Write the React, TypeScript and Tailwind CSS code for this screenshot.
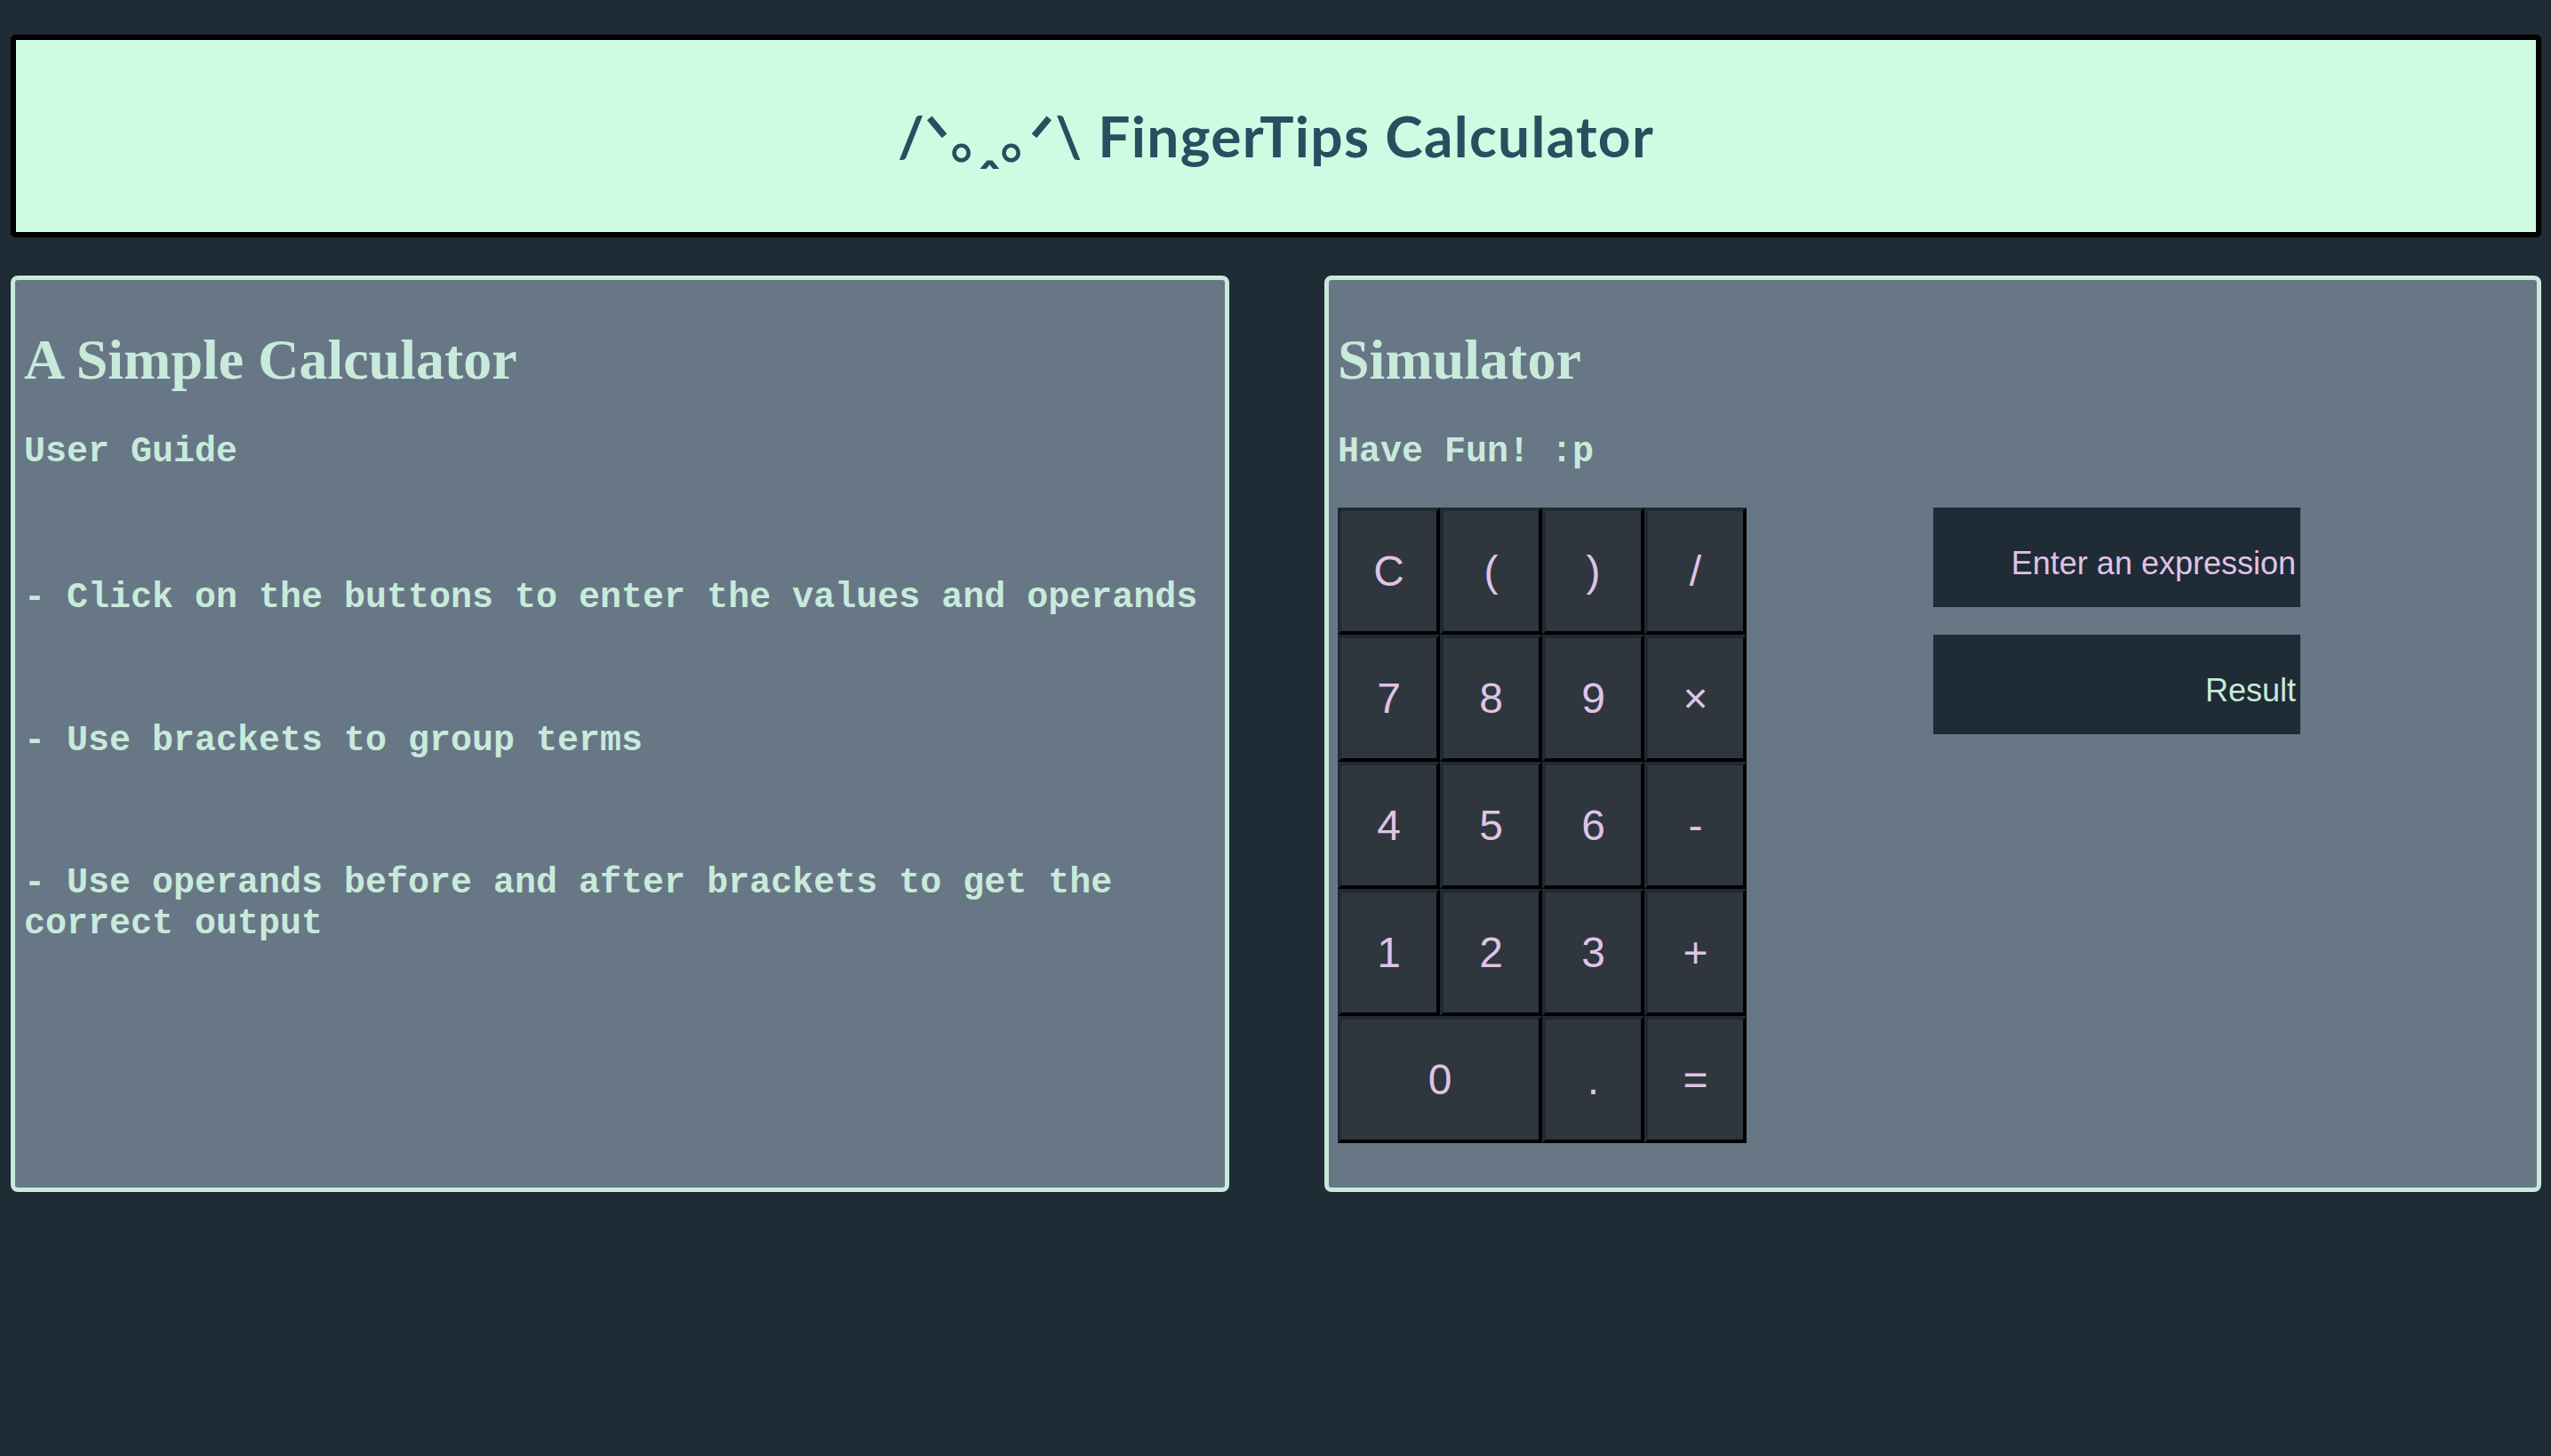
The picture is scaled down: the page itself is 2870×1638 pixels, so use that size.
import React from "react";

const keys: { label: string; span?: boolean }[] = [
  { label: "C" },
  { label: "(" },
  { label: ")" },
  { label: "/" },
  { label: "7" },
  { label: "8" },
  { label: "9" },
  { label: "×" },
  { label: "4" },
  { label: "5" },
  { label: "6" },
  { label: "-" },
  { label: "1" },
  { label: "2" },
  { label: "3" },
  { label: "+" },
  { label: "0", span: true },
  { label: "." },
  { label: "=" },
];

export default function App() {
  return (
    <div className="min-h-[1638px] w-full bg-[#1f2b35] pt-[39px] pl-[12px]">
      <header className="w-[2847px] h-[228px] border-[6px] border-black rounded-[5px] bg-[#cffbe3] flex items-center justify-center">
        <h1 className="font-['Lato','DejaVu_Sans','Noto_Sans_CJK_JP',sans-serif] font-bold text-[64px] leading-none tracking-[1.3px] text-[#24505f]">
          /ᐠ｡ꞈ｡ᐟ\ FingerTips Calculator
        </h1>
      </header>

      <div className="flex gap-[107px] mt-[43px]">
        <section className="w-[1371px] h-[1031px] border-[5px] border-[#c8eadb] rounded-[8px] bg-[#677785] px-[10px] pt-[10px] text-[#c8eadb]">
          <h2 className="mt-[44px] font-['Liberation_Serif',serif] font-bold text-[64px] leading-[72px]">
            A Simple Calculator
          </h2>
          <div className="font-['Liberation_Mono',monospace] font-bold text-[40px] leading-[46px]">
            <p className="mt-[45px]">User Guide</p>
            <p className="mt-[118px]">- Click on the buttons to enter the values and operands</p>
            <p className="mt-[115px]">- Use brackets to group terms</p>
            <p className="mt-[114px]">- Use operands before and after brackets to get the correct output</p>
          </div>
        </section>

        <section className="w-[1369px] h-[1031px] border-[5px] border-[#c8eadb] rounded-[8px] bg-[#677785] px-[10px] pt-[10px] text-[#c8eadb]">
          <h2 className="mt-[44px] font-['Liberation_Serif',serif] font-bold text-[64px] leading-[72px]">
            Simulator
          </h2>
          <p className="mt-[45px] font-['Liberation_Mono',monospace] font-bold text-[40px] leading-[46px]">
            Have Fun! :p
          </p>
          <div className="mt-[39px] flex items-start gap-[210px]">
            <div className="grid grid-cols-4 auto-rows-[143px] w-[460px]">
              {keys.map((k) => (
                <button
                  key={k.label}
                  className={`${k.span ? "col-span-2" : ""} flex items-center justify-center bg-[#2f363e] border-4 border-t-[#1f2a33] border-l-[#1f2a33] border-r-black border-b-black font-['Liberation_Sans',Arial,sans-serif] text-[48px] text-[#dfc3e6]`}
                >
                  {k.label}
                </button>
              ))}
            </div>
            <div className="flex flex-col gap-[31px] w-[413px]">
              <div className="h-[112px] bg-[#1f2b35] pt-[42px] pr-[5px] text-right font-['Liberation_Sans',Arial,sans-serif] text-[36px] leading-[42px] text-[#dfc3e6]">
                Enter an expression
              </div>
              <div className="h-[112px] bg-[#1f2b35] pt-[42px] pr-[5px] text-right font-['Liberation_Sans',Arial,sans-serif] text-[36px] leading-[42px] text-[#c8eadb]">
                Result
              </div>
            </div>
          </div>
        </section>
      </div>
    </div>
  );
}
